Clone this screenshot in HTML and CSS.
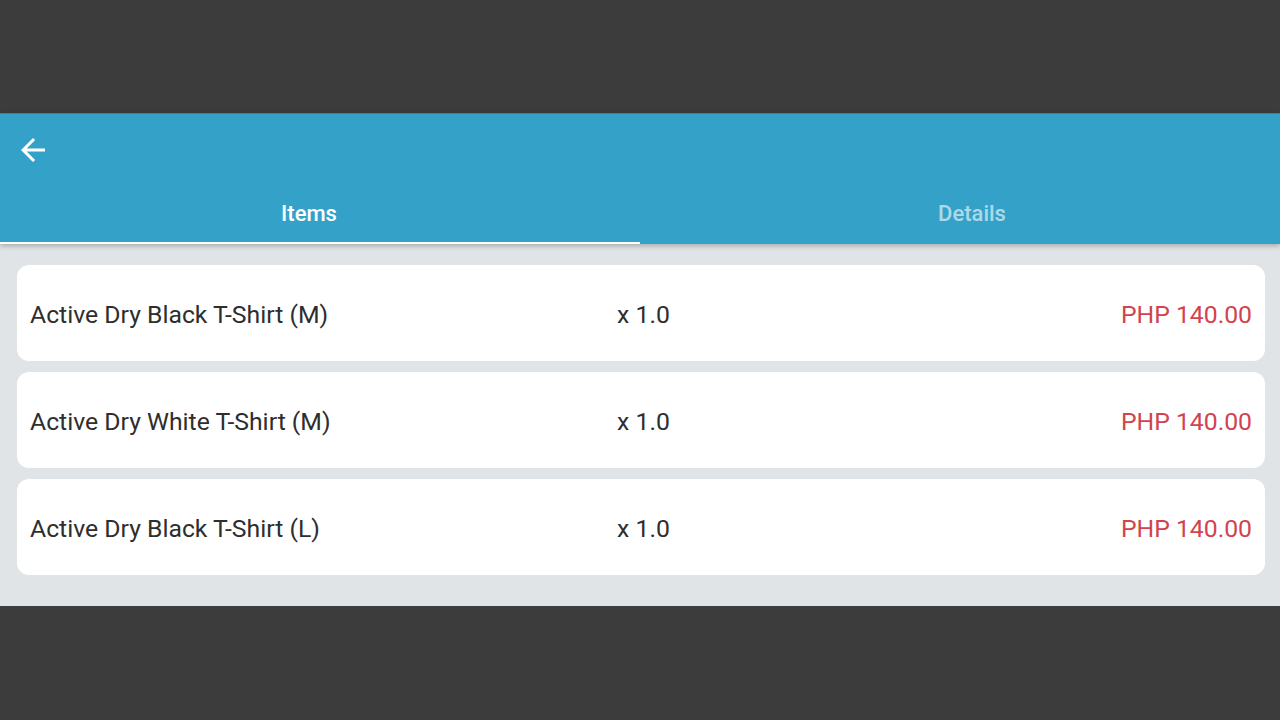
FILE: index.html
```html
<!DOCTYPE html>
<html>
<head>
<meta charset="utf-8">
<link rel="stylesheet" href="styles.css">
</head>
<body>
<div class="screen">
  <header class="appbar">
    <div class="toolbar">
      <svg class="back" width="36" height="36" viewBox="0 0 24 24"><path d="M20 11H7.83l5.59-5.59L12 4l-8 8 8 8 1.41-1.41L7.83 13H20v-2z" fill="#fff"/></svg>
    </div>
    <nav class="tabs">
      <div class="tab active"><span>Items</span></div>
      <div class="tab"><span>Details</span></div>
    </nav>
  </header>
  <main class="content">
    <div class="card"><span class="name">Active Dry Black T-Shirt (M)</span><span class="qty">x 1.0</span><span class="price">PHP 140.00</span></div>
    <div class="card"><span class="name">Active Dry White T-Shirt (M)</span><span class="qty">x 1.0</span><span class="price">PHP 140.00</span></div>
    <div class="card"><span class="name">Active Dry Black T-Shirt (L)</span><span class="qty">x 1.0</span><span class="price">PHP 140.00</span></div>
  </main>
</div>
</body>
</html>
```
FILE: styles.css
```css
html, body {
  margin: 0;
  padding: 0;
  background: #3c3c3c;
  font-family: Roboto, "Liberation Sans", sans-serif;
}
.screen {
  margin-top: 113px;
  width: 1280px;
  height: 493px;
  background: #e0e4e7;
  display: flex;
  flex-direction: column;
}
.appbar {
  background: #34a2c8;
  border-top: 1px solid #2d86a6;
  box-shadow: 0 2px 5px rgba(0,0,0,0.25);
  position: relative;
  z-index: 1;
}
.toolbar {
  height: 72px;
  display: flex;
  align-items: center;
  padding-left: 15px;
}
.back { display: block; }
.tabs {
  display: flex;
  height: 58px;
}
.tab {
  width: 640px;
  flex: none;
  display: flex;
  align-items: center;
  justify-content: center;
  font-size: 22px;
  font-weight: 500;
  color: rgba(255,255,255,0.6);
  box-sizing: border-box;
  padding-bottom: 4px;
}
.tab:first-child { padding-right: 22px; }
.tab:last-child { padding-left: 24px; }
.tab.active {
  color: #fff;
  border-bottom: 2px solid #fff;
  padding-bottom: 2px;
}
.content {
  padding: 21px 15px 30px 17px;
  display: flex;
  flex-direction: column;
  gap: 11px;
}
.card {
  background: #fff;
  border-radius: 12px;
  height: 96px;
  box-sizing: border-box;
  padding: 2px 13px 0;
  display: grid;
  grid-template-columns: 1fr auto 1fr;
  align-items: center;
  font-size: 24.75px;
  color: #2e2e2e;
}
.qty { padding-left: 5px; }
.price {
  justify-self: end;
  color: #d1434f;
}
```
